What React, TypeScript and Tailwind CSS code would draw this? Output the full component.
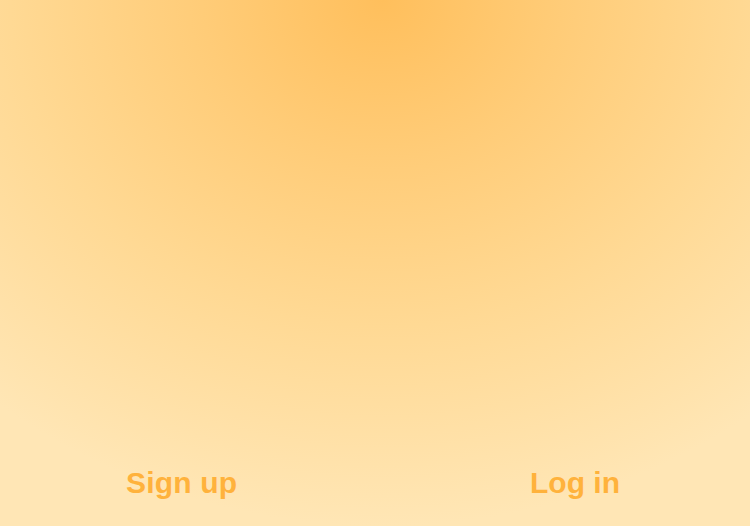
export default function App() {
  return (
    <div className="h-[526px] w-[750px] flex flex-col bg-[radial-gradient(ellipse_80%_100%_at_51%_0%,#ffbf5c_0%,#ffcc78_30%,#ffd994_62%,#ffe6b5_100%)] font-['Liberation_Sans',Arial,sans-serif]">
      <div className="flex-1" />
      <div className="flex items-center justify-between pl-[126px] pr-[130px] pb-[28px]">
        <button className="text-[30px] leading-[30px] font-bold tracking-[0.2px] text-[#ffb23c]">Sign up</button>
        <button className="text-[30px] leading-[30px] font-bold text-[#ffb23c]">Log in</button>
      </div>
    </div>
  );
}
